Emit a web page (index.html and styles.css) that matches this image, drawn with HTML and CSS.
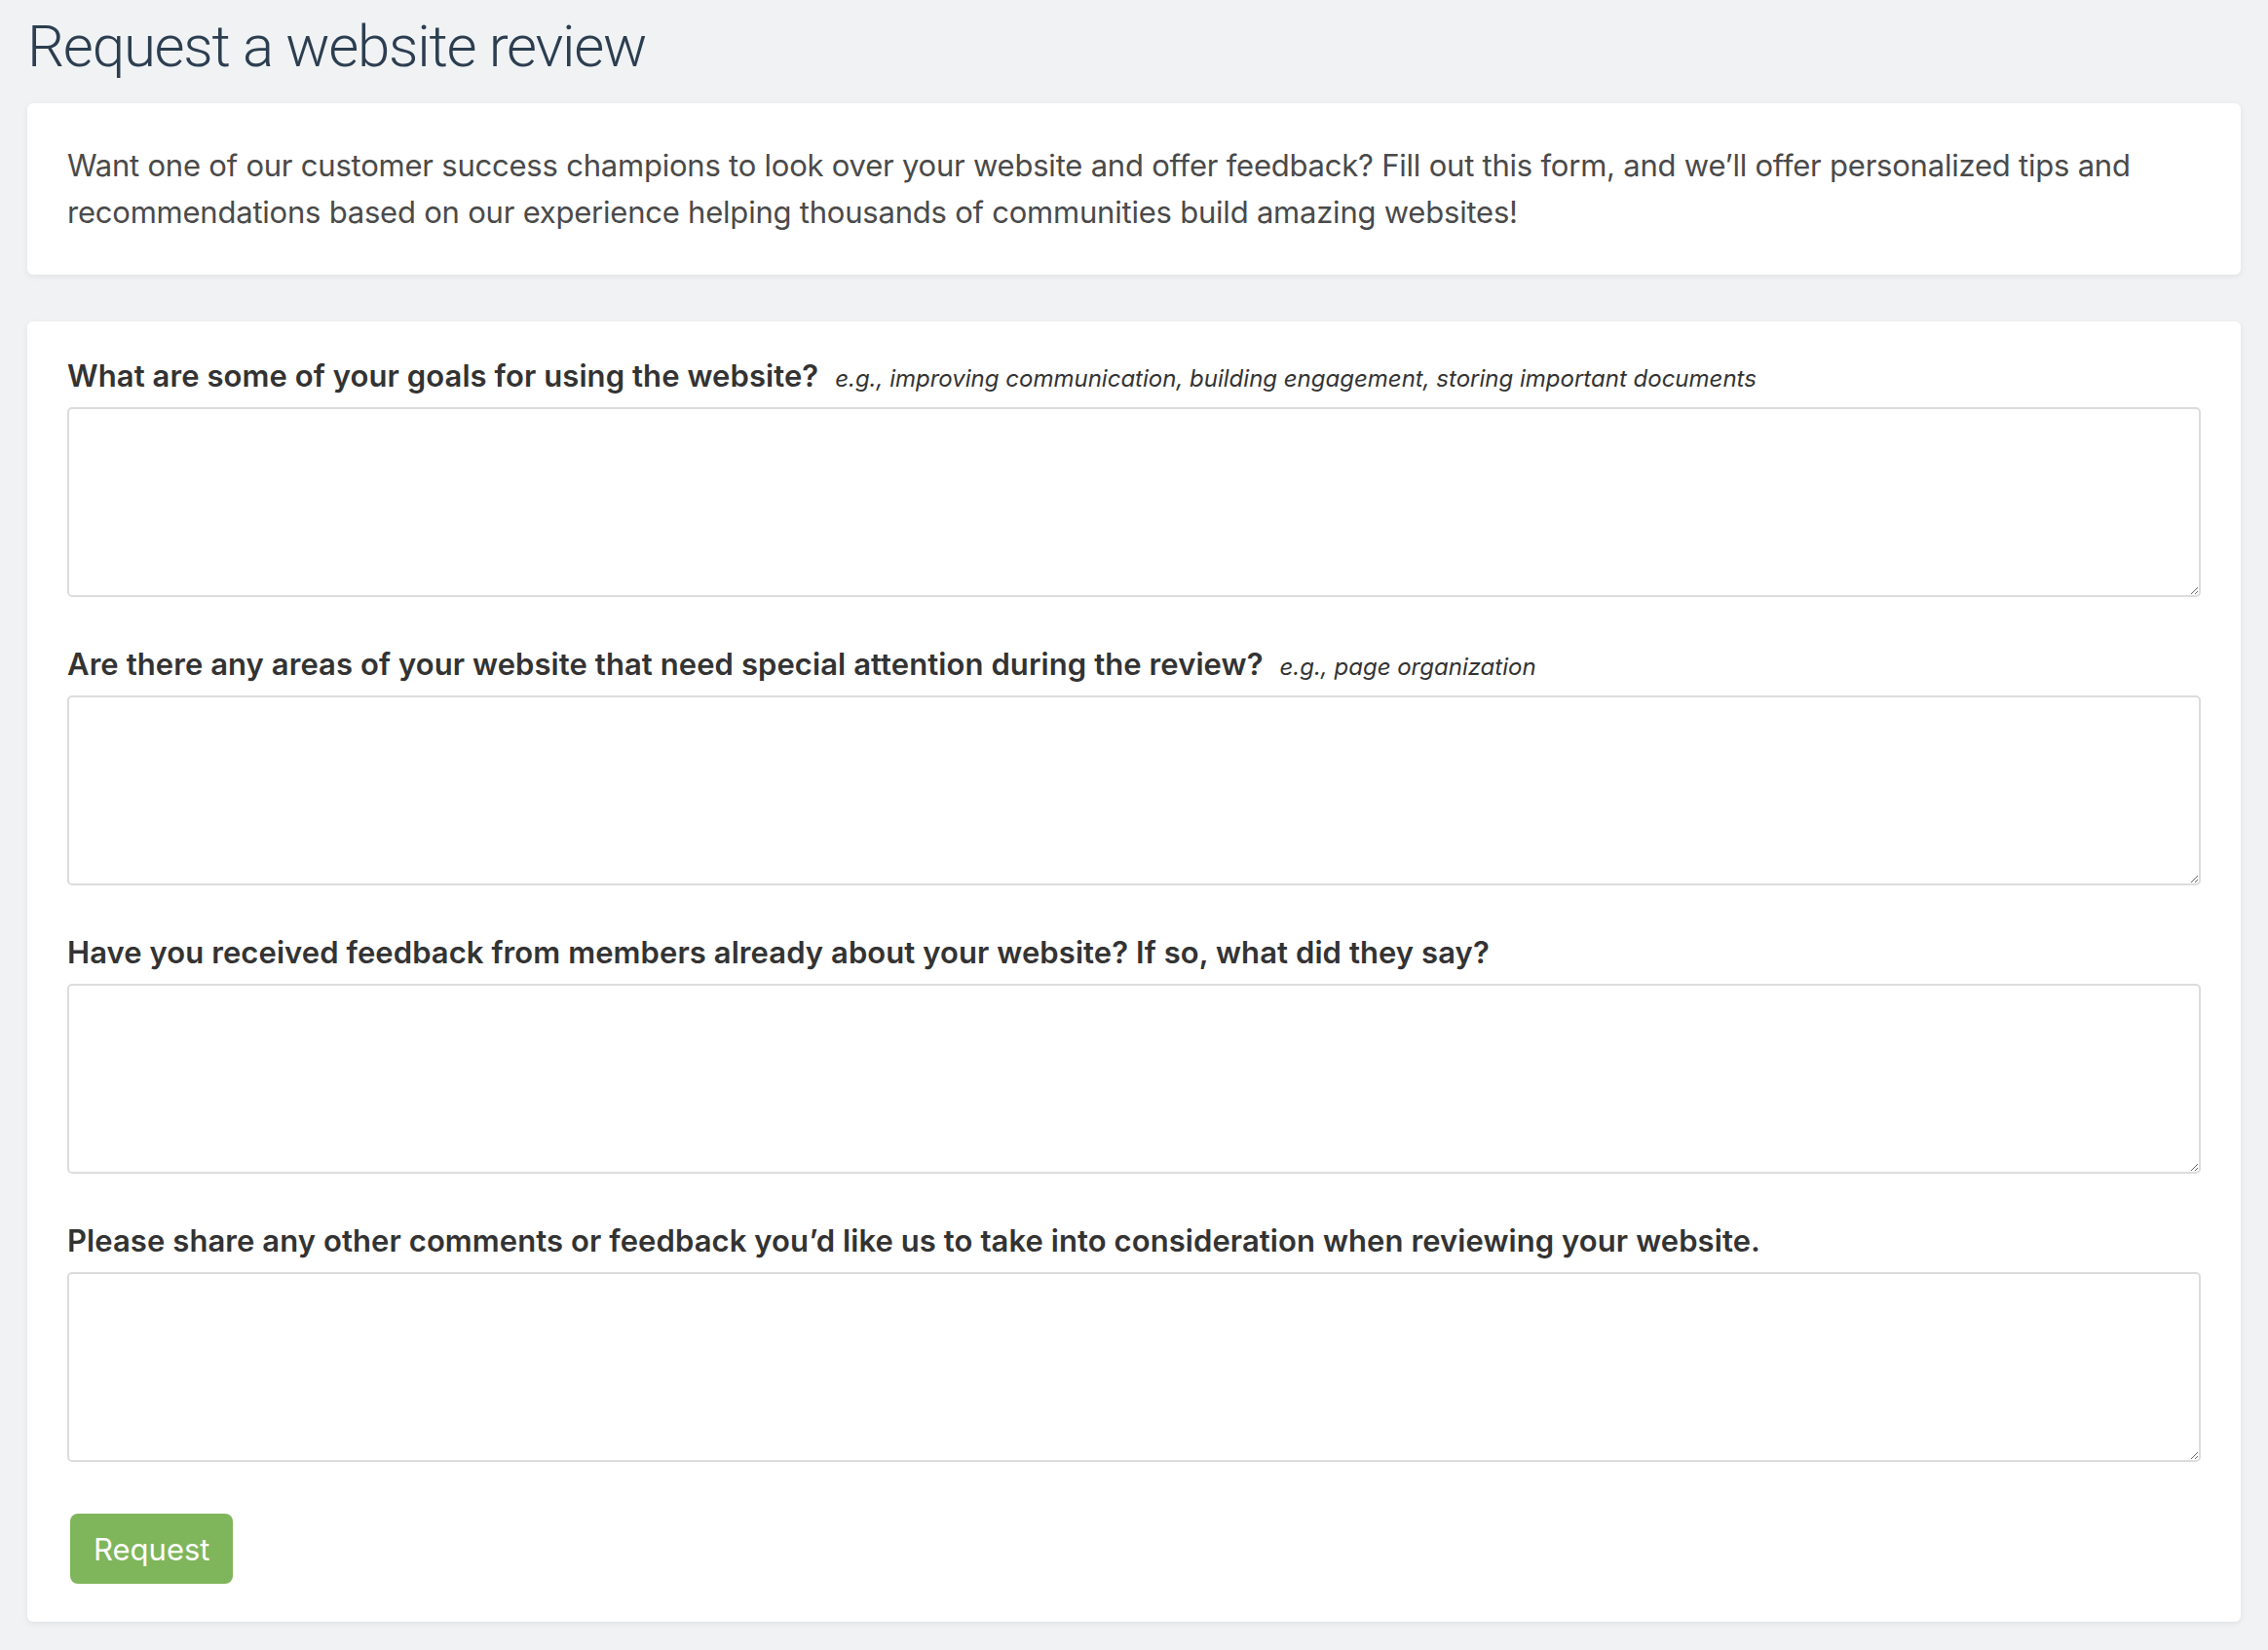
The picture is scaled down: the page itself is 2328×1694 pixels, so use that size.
FILE: index.html
```html
<!DOCTYPE html>
<html lang="en">
<head>
<meta charset="utf-8">
<title>Request a website review</title>
<link rel="stylesheet" href="styles.css">
</head>
<body>
<div class="page">
  <h1 class="title">Request a website review</h1>
  <section class="card intro">
    <p>Want one of our customer success champions to look over your website and offer feedback? Fill out this form, and we’ll offer personalized tips and recommendations based on our experience helping thousands of communities build amazing websites!</p>
  </section>
  <form class="card form">
    <div class="field">
      <label class="label">What are some of your goals for using the website? <span class="hint">e.g., improving communication, building engagement, storing important documents</span></label>
      <textarea class="input"></textarea>
    </div>
    <div class="field">
      <label class="label">Are there any areas of your website that need special attention during the review? <span class="hint">e.g., page organization</span></label>
      <textarea class="input"></textarea>
    </div>
    <div class="field">
      <label class="label">Have you received feedback from members already about your website? If so, what did they say?</label>
      <textarea class="input"></textarea>
    </div>
    <div class="field">
      <label class="label">Please share any other comments or feedback you’d like us to take into consideration when reviewing your website.</label>
      <textarea class="input"></textarea>
    </div>
    <button type="button" class="btn">Request</button>
  </form>
</div>
</body>
</html>
```
FILE: styles.css
```css
* { box-sizing: border-box; }
html, body { margin: 0; padding: 0; }
body {
  background: #f0f2f4;
  font-family: Inter, "Helvetica Neue", Arial, sans-serif;
  color: #4a4a4a;
}
.page {
  padding: 12px 28px 28px 28px;
  display: flex;
  flex-direction: column;
}
.title {
  margin: 0 0 22px 0;
  font-family: Roboto, Inter, Arial, sans-serif;
  font-size: 60px;
  line-height: 72px;
  font-weight: 300;
  letter-spacing: -1.25px;
  color: #2c3e50;
}
.card {
  background: #fff;
  border-radius: 6px;
  box-shadow: 0 2px 6px rgba(0, 0, 0, 0.07);
}
.intro {
  padding: 40px 41px;
  margin-bottom: 48px;
}
.intro p {
  margin: 0;
  font-size: 31px;
  line-height: 48px;
  letter-spacing: -0.22px;
  color: #4a4a4a;
}
.form {
  padding: 32px 41px 39px 41px;
  display: flex;
  flex-direction: column;
}
.field {
  display: flex;
  flex-direction: column;
  margin-bottom: 45px;
}
.field:last-of-type { margin-bottom: 53px; }
.label {
  font-size: 31px;
  line-height: 48px;
  font-weight: 600;
  letter-spacing: 0.08px;
  color: #333;
  margin-bottom: 8px;
}
.hint {
  font-size: 24px;
  line-height: 1;
  font-weight: 400;
  font-style: italic;
  letter-spacing: 0;
  margin-left: 9px;
  color: #333;
}
.input {
  display: block;
  width: 100%;
  height: 195px;
  border: 2px solid #dcdcdc;
  border-radius: 5px;
  background: #fff;
  font: inherit;
  margin: 0;
}
.btn {
  align-self: flex-start;
  margin-left: 3px;
  height: 72px;
  padding: 0 24px;
  background: #7fb55b;
  color: #fff;
  border: none;
  border-radius: 8px;
  font-family: inherit;
  font-size: 31px;
  font-weight: 400;
}
```
